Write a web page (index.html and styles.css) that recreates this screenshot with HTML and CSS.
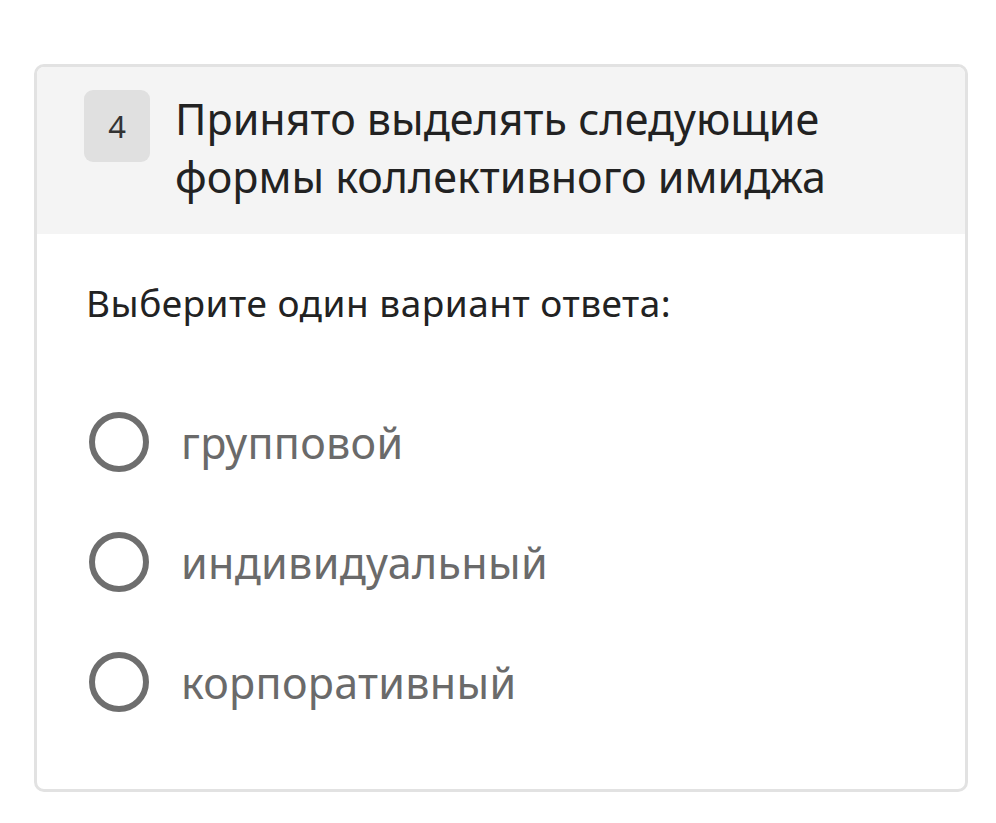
FILE: index.html
```html
<!DOCTYPE html>
<html lang="ru">

<head>
  <meta charset="UTF-8">
  <meta name="viewport" content="width=device-width, initial-scale=1.0">
  <title>Вопрос 4</title>
  <link rel="stylesheet" href="styles.css">
</head>

<body>
  <div class="question">
    <div class="question-head">
      <div class="question-num">4</div>
      <div class="question-text">Принято выделять следующие формы коллективного имиджа</div>
    </div>

    <div class="question-body">
      <div class="hint">Выберите один вариант ответа:</div>
      <ul class="answers">
        <li class="answer">
          <span class="radio"></span>
          <span class="answer-text">групповой</span>
        </li>
        <li class="answer">
          <span class="radio"></span>
          <span class="answer-text">индивидуальный</span>
        </li>
        <li class="answer">
          <span class="radio"></span>
          <span class="answer-text">корпоративный</span>
        </li>
      </ul>
    </div>
  </div>
</body>

</html>
```

FILE: styles.css
```css
body {
  font-family: 'Noto Sans', 'Open Sans', Arial, sans-serif;
  margin: 0;
  padding: 64px 28px 0 34px;
  background-color: white;
  color: #222;
}

.question {
  border: 3px solid #e2e2e2;
  border-radius: 10px;
  overflow: hidden;
  height: 722px;
}

.question-head {
  display: flex;
  align-items: flex-start;
  gap: 25px;
  padding: 23px 40px 28px 47px;
  background-color: #f4f4f4;
}

.question-num {
  flex: none;
  width: 66px;
  height: 72px;
  display: flex;
  align-items: center;
  justify-content: center;
  border-radius: 9px;
  background-color: #e0e0e0;
  font-size: 31px;
  color: #333;
}

.question-text {
  font-size: 43px;
  line-height: 58px;
  color: #222;
}

.question-body {
  padding: 44px 40px 0 49px;
}

.hint {
  font-size: 37px;
  line-height: 50px;
  letter-spacing: 0.5px;
  color: #222;
}

.answers {
  list-style: none;
  margin: 84px 0 0;
  padding: 0;
}

.answer {
  display: flex;
  align-items: center;
  gap: 32px;
  height: 60px;
  margin-bottom: 60px;
}

.radio {
  flex: none;
  width: 48px;
  height: 48px;
  border: 6px solid #6e6e6e;
  border-radius: 50%;
  margin-left: 3px;
}

.answer-text {
  font-size: 43px;
  letter-spacing: 0.3px;
  color: #6a6a6a;
}
```
